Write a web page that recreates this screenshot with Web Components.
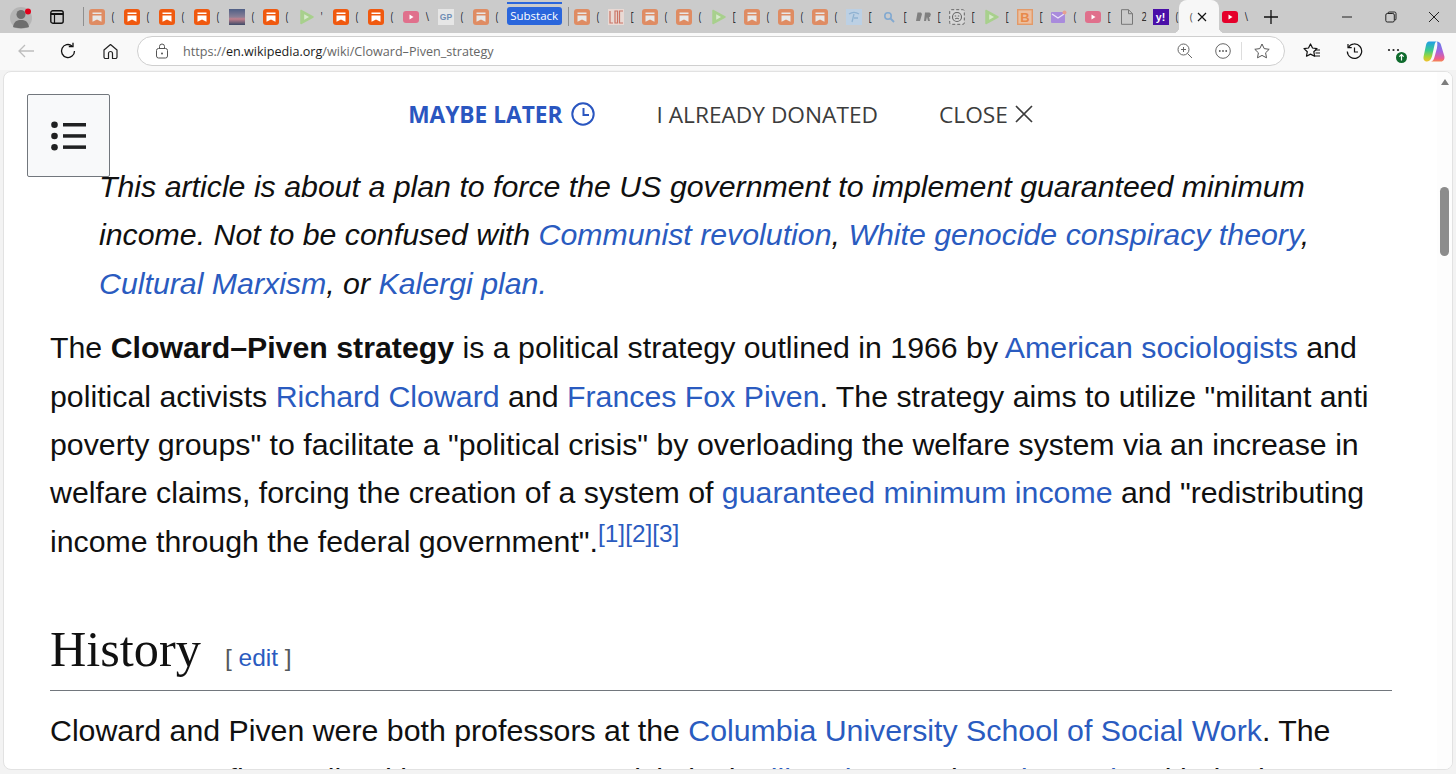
<!DOCTYPE html>
<html>
<head>
<meta charset="utf-8">
<title>Cloward–Piven strategy</title>
<style>
html,body{margin:0;padding:0;height:774px;overflow:hidden;background:#f3f3f3;font-family:"Liberation Sans",Arial,sans-serif;}
wiki-article a{color:#2a5bc0;text-decoration:none;}
wiki-article sup{font-size:24.400px;line-height:0;vertical-align:baseline;position:relative;top:-10px;}
</style>
</head>
<body>
<browser-tabs></browser-tabs>
<browser-toolbar url-host="en.wikipedia.org" url-path="/wiki/Cloward–Piven_strategy"></browser-toolbar>
<page-card>
  <donate-banner></donate-banner>
  <toc-button></toc-button>
  <wiki-article>
    <wiki-hatnote>This article is about a plan to force the US government to implement guaranteed minimum income. Not to be confused with <a>Communist revolution</a>, <a>White genocide conspiracy theory</a>, <a>Cultural Marxism</a>, or <a>Kalergi plan.</a></wiki-hatnote>
    <wiki-para>The <b>Cloward–Piven strategy</b> is a political strategy outlined in 1966 by <a>American sociologists</a> and political activists <a>Richard Cloward</a> and <a>Frances Fox Piven</a>. The strategy aims to utilize "militant anti poverty groups" to facilitate a "political crisis" by overloading the welfare system via an increase in welfare claims, forcing the creation of a system of <a>guaranteed minimum income</a> and "redistributing income through the federal government".<sup><a>[1]</a><a>[2]</a><a>[3]</a></sup></wiki-para>
    <wiki-heading>History</wiki-heading>
    <wiki-para>Cloward and Piven were both professors at the <a>Columbia University School of Social Work</a>. The strategy was first outlined in a May 1966 article in the <a>liberal</a> magazine <a><i>The Nation</i></a> titled "The Weight of</wiki-para>
  </wiki-article>
</page-card>

<script>
const ICONS = {
  sub: (o)=>`<svg width="16" height="16" viewBox="0 0 16 16" style="opacity:${o}"><rect width="16" height="16" rx="3" fill="#f0590f"/><path d="M3.5 3.500h9v1.600h-9zM3.500 6.400h9v6.400L8 10.500l-4.500 2.300z" fill="#fff"/></svg>`,
  play: ()=>`<svg width="16" height="16" viewBox="0 0 16 16"><path d="M3 1.500 15 8 3 14.500z" fill="#a8d08d" stroke="#a8d08d" stroke-width="1.500" stroke-linejoin="round"/><path d="M6.200 5.300 11 8l-4.800 2.700z" fill="#d8e9cc"/></svg>`,
  img: ()=>`<svg width="16" height="16" viewBox="0 0 16 16"><defs><linearGradient id="s" x1="0" y1="0" x2="0" y2="1"><stop offset="0" stop-color="#4f5f86"/><stop offset=".5" stop-color="#8a7f96"/><stop offset=".62" stop-color="#c2808c"/><stop offset="1" stop-color="#3c4a68"/></linearGradient></defs><rect width="16" height="16" fill="url(#s)"/></svg>`,
  ytf: ()=>`<svg width="16" height="12" viewBox="0 0 16 12"><rect width="16" height="12" rx="3" fill="#e0708c"/><path d="M6.500 3.500 10.500 6l-4 2.500z" fill="#fff"/></svg>`,
  yt: ()=>`<svg width="16" height="12" viewBox="0 0 16 12"><rect width="16" height="12" rx="3" fill="#e5002b"/><path d="M6.500 3.500 10.500 6l-4 2.500z" fill="#fff"/></svg>`,
  gp: ()=>`<svg width="16" height="16" viewBox="0 0 16 16"><rect width="16" height="16" fill="#e6e6e6"/><text x="8" y="11" text-anchor="middle" font-size="8.500" font-weight="700" font-family="Liberation Sans" fill="#6f8db5">GP</text></svg>`,
  loc: ()=>`<svg width="16" height="16" viewBox="0 0 16 16"><rect width="16" height="16" fill="#e9d9d4"/><path d="M2 2v12h3M7 2h2.500v12H7zM15 2h-3.500v12H15" fill="none" stroke="#cb7464" stroke-width="1.200"/></svg>`,
  wiki: ()=>`<svg width="16" height="16" viewBox="0 0 16 16"><rect width="16" height="16" fill="#bcd0e4"/><path d="M3 5c3-2 7-2 10 0M8 5 6 13M8 9h4" fill="none" stroke="#8fb2d2" stroke-width="1.300"/></svg>`,
  search: ()=>`<svg width="16" height="16" viewBox="0 0 16 16"><circle cx="7" cy="7" r="3.200" fill="none" stroke="#82a9d0" stroke-width="1.600"/><path d="M9.500 9.500 13 13" stroke="#82a9d0" stroke-width="1.800"/></svg>`,
  dr: ()=>`<svg width="16" height="16" viewBox="0 0 16 16"><path d="M2.500 3.500H6l1 1.500-2 7H1zM10 3.500h4.500L16 5l-1 3h-1l1 4h-2l-1-4-1 4H9z" fill="#808080"/></svg>`,
  face: ()=>`<svg width="16" height="16" viewBox="0 0 16 16"><rect x=".7" y=".7" width="14.600" height="14.600" rx="1.500" fill="#d8d8d8" stroke="#666" stroke-dasharray="3 2"/><circle cx="8" cy="8" r="4.500" fill="none" stroke="#666" stroke-width="1.100"/><path d="M5.700 7h1.500M8.800 7h1.500M6 10c1-1 3-1 4 0" stroke="#666" fill="none"/></svg>`,
  blog: ()=>`<svg width="16" height="16" viewBox="0 0 16 16"><rect x=".7" y=".7" width="14.600" height="14.600" fill="#ecc0a0" stroke="#e39a68" stroke-width="1.400"/><text x="8" y="13" text-anchor="middle" font-size="13" font-weight="700" font-family="Liberation Sans" fill="#e8894a">B</text></svg>`,
  mail: ()=>`<svg width="16" height="14" viewBox="0 0 16 14"><rect y="2" width="14" height="11" rx="1" fill="#a98bdc"/><path d="M1 4l6 4 6-4" fill="none" stroke="#ece4f8" stroke-width="1.200"/><circle cx="13.500" cy="2.500" r="2" fill="#e8a090"/></svg>`,
  doc: ()=>`<svg width="14" height="16" viewBox="0 0 14 16"><path d="M1.500.7h7l4 4v10.600h-11zM8.500.7v4h4" fill="none" stroke="#777" stroke-width="1"/></svg>`,
  yahoo: ()=>`<svg width="16" height="16" viewBox="0 0 16 16"><rect width="16" height="16" fill="#4a0fa8"/><text x="7.500" y="12" text-anchor="middle" font-size="10.500" font-weight="700" font-family="Liberation Sans" fill="#fff">y!</text></svg>`
};

class tabIcon extends HTMLElement {
  constructor(){
    super();
    this.attachShadow({mode:'open'});
  }
  connectedCallback(){
    const kind = this.getAttribute('kind');
    const frag = this.getAttribute('frag') || '(';
    const svg = kind === 'subf' ? ICONS.sub(.55) : ICONS[kind](1);
    this.shadowRoot.innerHTML = `
      <style>
        :host{display:flex;align-items:center;width:var(--tab-w,34.400px);height:33px;box-sizing:border-box;padding-left:5px;flex:none;}
        .ico{width:16px;height:16px;display:flex;align-items:center;justify-content:center;flex:none;}
        .frag{margin-left:6px;font:12px "Noto Sans",sans-serif;color:#333;width:6px;overflow:hidden;transform:scaleX(.8);}
      </style>
      <div class="ico">${svg}</div><div class="frag">${frag}</div>`;
  }
}
customElements.define('tab-icon', tabIcon);

class browserTabs extends HTMLElement {
  constructor(){
    super();
    this.attachShadow({mode:'open'});
  }
  connectedCallback(){
    const row = (list)=>list.map(k=>{
      const p = k.split(':');
      return `<tab-icon kind="${p[0]}" frag="${p[1]||'('}"></tab-icon>`;
    }).join('');
    this.shadowRoot.innerHTML = `
      <style>
        :host{display:flex;align-items:center;height:33px;background:#cbcbcb;position:relative;overflow:hidden;}
        .profile{width:44px;flex:none;padding-left:10px;box-sizing:border-box;height:33px;display:flex;align-items:center;}
        .view{width:39px;flex:none;padding-left:6px;box-sizing:border-box;display:flex;align-items:center;}
        .sep{width:1px;height:19px;background:#8f8f8f;flex:none;}
        .g1{display:flex;flex:none;--tab-w:34.900px;}
        .g2{display:flex;flex:none;--tab-w:34.100px;}
        .group{flex:none;align-self:flex-start;margin:2px 6px 0 4px;width:55px;height:23px;position:relative;display:flex;align-items:flex-end;}
        .group i{position:absolute;left:0;right:0;top:0;height:1.500px;background:#2a66dc;}
        .group span{display:block;width:55px;height:18px;background:#2a66dc;color:#fff;border-radius:3px;text-align:center;font:11.500px/18px "Open Sans","Noto Sans",sans-serif;}
        .active{flex:none;width:40px;height:33px;margin:0 -2px 0 -3px;background:#f7f7f7;border-radius:8px 8px 0 0;display:flex;align-items:center;font:10px "Noto Sans",sans-serif;color:#555;box-sizing:border-box;position:relative;}
        .active::before,.active::after{content:"";position:absolute;bottom:0;width:6px;height:6px;}
        .active::before{left:-6px;background:radial-gradient(circle at 0 0,transparent 6px,#f7f7f7 6.500px);}
        .active::after{right:-6px;background:radial-gradient(circle at 100% 0,transparent 6px,#f7f7f7 6.500px);}
        .active span{width:15px;overflow:hidden;white-space:pre;}
        .plus{flex:none;margin-left:9px;width:20px;display:flex;justify-content:center;}
        .win{position:absolute;top:0;right:0;height:33px;display:flex;align-items:center;}
        .win div{width:43.500px;display:flex;justify-content:center;}
      </style>
      <div class="profile">
        <svg width="24" height="26" viewBox="0 0 24 26">
          <circle cx="11" cy="14" r="11" fill="#b5b5b5"/>
          <circle cx="11" cy="10.500" r="4.500" fill="#6e6e6e"/>
          <path d="M3 23c1-6 4-7 8-7s7 1 8 7c-2 1.500-14 1.500-16 0z" fill="#6e6e6e"/>
          <circle cx="18" cy="7.500" r="3" fill="#e3001b"/>
        </svg>
      </div>
      <div class="view">
        <svg width="14" height="14" viewBox="0 0 14 14"><rect x=".8" y=".8" width="12.400" height="12.400" rx="2" fill="none" stroke="#111" stroke-width="1.400"/><path d="M.8 4h12.400" stroke="#111" stroke-width="2"/><path d="M4.500 4v9" stroke="#111" stroke-width="1.200"/></svg>
      </div>
      <div class="sep"></div>
      <div class="g1">${row(['subf','sub','sub','sub','img','sub','play:\'','sub','sub','ytf:\\','gp','subf'])}</div>
      <div class="group"><i></i><span>Substack</span></div>
      <div class="sep"></div>
      <div class="g2">${row(['subf','loc:[','subf','subf','play:[','subf','subf','subf','wiki:[','search:[','dr:[','face:[','play:[','blog:[','mail','ytf:[','doc:2','yahoo'])}</div>
      <div class="active"><span>    ( (</span><svg style="margin-left:1px" width="14" height="14" viewBox="0 0 14 14"><path d="M3 3l8 8M11 3l-8 8" stroke="#111" stroke-width="1.200"/></svg></div>
      <tab-icon kind="yt" frag="\\" style="--tab-w:34.900px"></tab-icon>
      <div class="plus"><svg width="14" height="14" viewBox="0 0 14 14"><path d="M7 0v14M0 7h14" stroke="#111" stroke-width="1.300"/></svg></div>
      <div class="win">
        <div><svg width="12" height="12" viewBox="0 0 12 12"><path d="M1 6h10" stroke="#222"/></svg></div>
        <div><svg width="12" height="12" viewBox="0 0 12 12"><rect x=".8" y="2.500" width="8.500" height="8.500" rx="1.500" fill="none" stroke="#222"/><path d="M3 2.500V2a1.200 1.200 0 0 1 1.200-1h5.300A1.500 1.500 0 0 1 11 2.500v5.300A1.200 1.200 0 0 1 9.500 9" fill="none" stroke="#222"/></svg></div>
        <div><svg width="12" height="12" viewBox="0 0 12 12"><path d="M1 1l10 10M11 1 1 11" stroke="#222"/></svg></div>
      </div>`;
  }
}
customElements.define('browser-tabs', browserTabs);

class browserToolbar extends HTMLElement {
  constructor(){
    super();
    this.attachShadow({mode:'open'});
  }
  connectedCallback(){
    this.shadowRoot.innerHTML = `
      <style>
        :host{display:flex;align-items:center;height:37px;background:#f9f9f9;box-sizing:border-box;padding:0 0 1px 5px;}
        .btn{width:42px;height:30px;display:flex;align-items:center;justify-content:center;flex:none;}
        .pill{flex:none;margin-left:6px;width:1148px;height:30px;box-sizing:border-box;background:#fff;border:1px solid #cfcfcf;border-radius:15px;display:flex;align-items:center;padding:0 0 0 17px;}
        .url{margin-left:14px;flex:1;font:12.600px "Open Sans","Noto Sans",sans-serif;color:#666;white-space:nowrap;}
        .url b{font-weight:400;color:#1b1b1b;}
        .in{display:flex;align-items:center;}
        .div{width:1px;height:18px;background:#ddd;margin:0 12px 0 10px;}
        .tool{position:relative;}
        .badge{position:absolute;left:21px;top:16px;width:11px;height:11px;}
      </style>
      <div class="btn"><svg width="18" height="16" viewBox="0 0 18 16"><path d="M17 8H2M8 2 2 8l6 6" fill="none" stroke="#bdbdbd" stroke-width="1.300"/></svg></div>
      <div class="btn"><svg width="18" height="18" viewBox="0 0 18 18"><path d="M15.500 9A6.500 6.500 0 1 1 13 3.900" fill="none" stroke="#111" stroke-width="1.300"/><path d="M9.800 4.500h4.200V.7" fill="none" stroke="#111" stroke-width="1.300"/></svg></div>
      <div class="btn"><svg width="17" height="17" viewBox="0 0 17 17"><path d="M8.500 1.500 2 7v7a1.500 1.500 0 0 0 1.500 1.500H6.500V10.500a2 2 0 0 1 4 0v5h3A1.500 1.500 0 0 0 15 14V7z" fill="none" stroke="#222" stroke-width="1.200" stroke-linejoin="round"/></svg></div>
      <div class="pill">
        <svg width="14" height="16" viewBox="0 0 14 16"><rect x="1.500" y="5.500" width="11" height="9.500" rx="2" fill="none" stroke="#555"/><path d="M4.500 5.500V3.500a2.500 2.500 0 0 1 5 0v2" fill="none" stroke="#555"/><circle cx="7" cy="10.500" r="1" fill="#555"/></svg>
        <div class="url">https://<b>${this.getAttribute('url-host')}</b>${this.getAttribute('url-path')}</div>
        <div class="in">
          <svg width="16" height="16" viewBox="0 0 16 16"><circle cx="6.500" cy="6.500" r="5.500" fill="none" stroke="#666"/><path d="M10.500 10.500 15 15M6.500 4v5M4 6.500h5" stroke="#666" fill="none"/></svg>
          <svg style="margin-left:22px" width="16" height="16" viewBox="0 0 16 16"><circle cx="8" cy="8" r="7.300" fill="none" stroke="#666"/><circle cx="4.800" cy="8" r=".9" fill="#555"/><circle cx="8" cy="8" r=".9" fill="#555"/><circle cx="11.200" cy="8" r=".9" fill="#555"/></svg>
          <div class="div"></div>
          <svg width="16" height="16" viewBox="0 0 16 16"><path d="M8 1l2.200 4.600 5 .7-3.600 3.500.9 5L8 12.400l-4.500 2.400.9-5L.8 6.300l5-.7z" fill="none" stroke="#555" stroke-linejoin="round"/></svg>
          <div style="width:14px"></div>
        </div>
      </div>
      <div class="btn" style="margin-left:6px"><svg width="18" height="16" viewBox="0 0 18 16"><path d="M7.500 1l2 4 4.500.6-3.200 3.100.8 4.500-4.100-2.100-4 2.100.8-4.500L1 5.600 5.500 5z" fill="none" stroke="#111" stroke-width="1.200" stroke-linejoin="round"/><path d="M12 7h5M12.500 10h4.500M11.500 13h5.500" stroke="#111" stroke-width="1.200"/></svg></div>
      <div class="btn"><svg width="17" height="17" viewBox="0 0 17 17"><path d="M2.300 4.500A7.200 7.200 0 1 1 1.300 8.500" fill="none" stroke="#111" stroke-width="1.200"/><path d="M2 1v3.700h3.700M8.500 4.500v4.500h3.500" fill="none" stroke="#111" stroke-width="1.200"/></svg></div>
      <div class="btn tool"><svg width="16" height="4" viewBox="0 0 16 4" style="margin:-3px 4px 0 0"><circle cx="3" cy="2" r="1.100" fill="#222"/><circle cx="7.500" cy="2" r="1.100" fill="#222"/><circle cx="12" cy="2" r="1.100" fill="#222"/></svg>
        <svg class="badge" viewBox="0 0 11 11"><circle cx="5.500" cy="5.500" r="5.500" fill="#0f6b2d"/><path d="M5.500 8.500v-6M3.300 4.700l2.200-2.200 2.200 2.200" fill="none" stroke="#fff" stroke-width="1.200"/></svg></div>
      <div class="btn" style="margin-left:-4px"><svg width="22" height="21" viewBox="0 0 22 21">
        <defs>
          <linearGradient id="cp1" x1="0" y1="0" x2="0" y2="1"><stop offset="0" stop-color="#1f9ee8"/><stop offset=".45" stop-color="#3ccb8c"/><stop offset=".75" stop-color="#a4d438"/><stop offset="1" stop-color="#f2c22e"/></linearGradient>
          <linearGradient id="cp2" x1="0" y1="0" x2="0" y2="1"><stop offset="0" stop-color="#5a80ea"/><stop offset=".5" stop-color="#a564e0"/><stop offset=".85" stop-color="#ee5f8e"/><stop offset="1" stop-color="#f5874e"/></linearGradient>
        </defs>
        <path d="M13.500.5c2.500 0 4 1.500 4.500 3.500l3.300 11c.7 3-.8 5.500-3.300 5.500H8c2 0 3-2.500 3.500-4.500L14 7c.5-3 .5-6.500-.5-6.500z" fill="url(#cp2)"/>
        <path d="M6 .5h8c-1.500 0-2 1.500-2.500 3.500l-2 9c-.5 3-2 7.500-5.500 7.500-3 0-4-2.500-3.300-5.500L3 4C3.500 2 4.500.5 6 .5z" fill="url(#cp1)"/>
      </svg></div>`;
  }
}
customElements.define('browser-toolbar', browserToolbar);

class pageCard extends HTMLElement {
  constructor(){
    super();
    this.attachShadow({mode:'open'});
  }
  connectedCallback(){
    this.shadowRoot.innerHTML = `
      <style>
        :host{display:block;margin:1px 3px 0 3px;height:699px;box-sizing:border-box;background:#fff;border:1px solid #e2e2e2;border-radius:8px;overflow:hidden;position:relative;}
        .row{display:flex;height:100%;}
        .col{flex:1;min-width:0;position:relative;}
        .track{width:15px;flex:none;position:relative;display:flex;flex-direction:column;align-items:center;padding-top:7px;box-sizing:border-box;background:#fdfdfd;}
        .arrow{width:0;height:0;border-left:4.500px solid transparent;border-right:4.500px solid transparent;border-bottom:6px solid #7d7d7d;}
        .thumb{margin-top:102px;width:9px;height:69px;border-radius:5px;background:#8c8c8c;}
      </style>
      <div class="row">
        <div class="col"><slot></slot></div>
        <div class="track"><div class="arrow"></div><div class="thumb"></div></div>
      </div>`;
  }
}
customElements.define('page-card', pageCard);

class donateBanner extends HTMLElement {
  constructor(){
    super();
    this.attachShadow({mode:'open'});
  }
  connectedCallback(){
    this.shadowRoot.innerHTML = `
      <style>
        :host{display:flex;justify-content:center;align-items:center;height:91px;box-sizing:border-box;padding-bottom:7px;font:22.700px "Open Sans","Noto Sans",sans-serif;color:#3c3c3c;white-space:nowrap;}
        .later{display:flex;align-items:center;color:#2a56c0;font-weight:700;}
        .later svg{margin-left:8px;}
        .done{margin-left:62px;}
        .close{margin-left:61px;display:flex;align-items:center;}
        .close svg{margin-left:7px;}
      </style>
      <div class="later">MAYBE LATER
        <svg width="24" height="24" viewBox="0 0 24 24"><circle cx="12" cy="12" r="10.700" fill="none" stroke="#2a56c0" stroke-width="2"/><path d="M12.500 6v7H18" fill="none" stroke="#2a56c0" stroke-width="2"/></svg>
      </div>
      <div class="done">I ALREADY DONATED</div>
      <div class="close">CLOSE
        <svg width="18" height="18" viewBox="0 0 18 18"><path d="M1 1l16 16M17 1 1 17" stroke="#3c3c3c" stroke-width="1.700"/></svg>
      </div>`;
  }
}
customElements.define('donate-banner', donateBanner);

class tocButton extends HTMLElement {
  constructor(){
    super();
    this.attachShadow({mode:'open'});
  }
  connectedCallback(){
    // sits on top of the article, like the sticky toc button
    this.shadowRoot.innerHTML = `
      <style>
        :host{position:absolute;left:23px;top:22px;width:83px;height:83px;box-sizing:border-box;background:#f8f9fa;border:1px solid #72777d;border-radius:2px;display:flex;align-items:center;justify-content:center;z-index:2;}
      </style>
      <svg width="36" height="30" viewBox="0 0 36 30"><g fill="#202122"><circle cx="3.500" cy="3.800" r="3.300"/><circle cx="3.500" cy="15" r="3.300"/><circle cx="3.500" cy="26.200" r="3.300"/><rect x="12" y="2" width="23" height="3.500"/><rect x="12" y="13.200" width="23" height="3.500"/><rect x="12" y="24.400" width="23" height="3.500"/></g></svg>`;
  }
}
customElements.define('toc-button', tocButton);

class wikiArticle extends HTMLElement {
  constructor(){
    super();
    this.attachShadow({mode:'open'});
  }
  connectedCallback(){
    this.shadowRoot.innerHTML = `
      <style>
        :host{display:block;padding:0 45px 0 46px;font:30.300px/48.400px "Liberation Sans",Arial,sans-serif;color:#202122;}
      </style>
      <slot></slot>`;
  }
}
customElements.define('wiki-article', wikiArticle);

class wikiHatnote extends HTMLElement {
  constructor(){
    super();
    this.attachShadow({mode:'open'});
    this.shadowRoot.innerHTML = `
      <style>:host{display:block;margin:0 0 16px 49px;font-style:italic;color:#101010;}</style>
      <slot></slot>`;
  }
}
customElements.define('wiki-hatnote', wikiHatnote);

class wikiPara extends HTMLElement {
  constructor(){
    super();
    this.attachShadow({mode:'open'});
    this.shadowRoot.innerHTML = `
      <style>:host{display:block;color:#101010;}</style>
      <slot></slot>`;
  }
}
customElements.define('wiki-para', wikiPara);

class wikiHeading extends HTMLElement {
  constructor(){
    super();
    this.attachShadow({mode:'open'});
    this.shadowRoot.innerHTML = `
      <style>
        :host{display:flex;align-items:baseline;margin:51px 0 16px;padding-bottom:9px;height:64px;box-sizing:content-box;border-bottom:1px solid #72777d;color:#111;}
        h2{margin:0;font:400 50.300px/64px "Liberation Serif","Times New Roman",serif;}
        .edit{margin-left:24px;font:24.500px "Liberation Sans",Arial,sans-serif;color:#54595d;}
        .edit a{color:#2a5bc0;}
      </style>
      <h2><slot></slot></h2>
      <span class="edit">[ <a>edit</a> ]</span>`;
  }
}
customElements.define('wiki-heading', wikiHeading);
</script>
</body>
</html>
